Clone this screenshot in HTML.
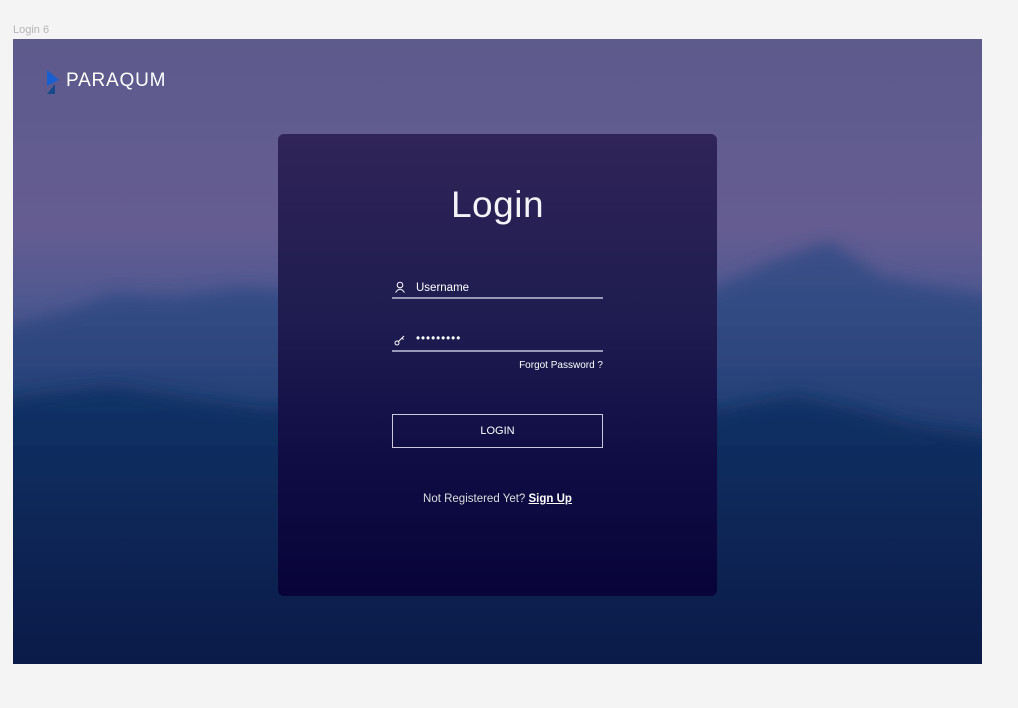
<!DOCTYPE html>
<html><head><meta charset="utf-8"><style>
*{margin:0;padding:0;box-sizing:border-box}
body{width:1018px;height:708px;background:#f4f4f4;position:relative;overflow:hidden;font-family:"Liberation Sans",sans-serif}
.lbl{position:absolute;left:13px;top:24px;font-size:11px;color:#b5b5b5}
.frame{position:absolute;left:13px;top:39px;width:969px;height:625px;overflow:hidden;background:linear-gradient(#5d5a8c 0%,#655d92 30%,#4f5890 42%,#2a4478 58%,#0f2655 78%,#0a1a4a 100%)}
.frame svg{position:absolute;left:0;top:0}
.card{position:absolute;left:265px;top:95px;width:439px;height:462px;border-radius:6px;background:linear-gradient(#302458 0%,#1e1c50 40%,#0f0d44 70%,#08043a 100%);color:#fff}
.title{position:absolute;left:0;width:100%;top:50px;text-align:center;font-size:37px;font-weight:300;letter-spacing:.5px;color:#f4f4f8}
.field{position:absolute;left:114px;width:211px;border-bottom:2px solid #9a98b8;font-size:11.5px;height:22px}
.field span{position:absolute;left:24px;top:5px}
.field svg{position:absolute;left:2px;top:4px}
.fp{position:absolute;right:114px;top:226px;font-size:10px}
.btn{position:absolute;left:114px;top:280px;width:211px;height:34px;border:1.5px solid #c9c8dc;text-align:center;line-height:32px;font-size:11px}
.reg{position:absolute;left:0;width:100%;top:359px;text-align:center;font-size:11.5px;color:#ddd}
.reg b{color:#fff;text-decoration:underline}
.logo{position:absolute;left:34px;top:30px;color:#fff;font-size:19px;letter-spacing:.8px}
</style></head><body>
<div class="lbl">Login 6</div>
<div class="frame">
<svg width="969" height="625" viewBox="0 0 969 625">
<defs><filter id="b" filterUnits="userSpaceOnUse" x="-100" y="0" width="1200" height="800"><feGaussianBlur stdDeviation="8"/></filter>
<linearGradient id="g1" gradientUnits="userSpaceOnUse" x1="0" y1="200" x2="0" y2="625"><stop offset="0" stop-color="#2f4a84"/><stop offset="1" stop-color="#1a3568"/></linearGradient>
<linearGradient id="g2" gradientUnits="userSpaceOnUse" x1="0" y1="345" x2="0" y2="625"><stop offset="0" stop-color="#123266"/><stop offset=".5" stop-color="#0e2656"/><stop offset="1" stop-color="#0a1a48"/></linearGradient></defs>
<polygon filter="url(#b)" fill="url(#g1)" opacity=".75" points="-40,300 60,270 100,255 160,258 230,248 300,255 400,235 500,245 600,255 700,250 760,222 817,202 870,238 930,250 1010,262 1010,625 -40,625"/>
<polygon filter="url(#b)" fill="url(#g2)" opacity=".9" points="-40,362 40,352 100,346 160,355 250,368 330,360 420,345 500,360 600,372 700,370 780,355 840,368 900,385 1010,400 1010,625 -40,625"/>
<rect x="0" y="440" width="969" height="185" fill="url(#g2)" opacity=".9"/>
</svg>
<div class="logo"><svg width="14" height="24" viewBox="0 0 14 24" style="position:absolute;left:0;top:1px"><polygon points="0,0 12,10 0,16" fill="#1a5fd0"/><polygon points="8,14 8,24 0,24" fill="#164a8a"/></svg><span style="position:absolute;left:19px;top:1px;white-space:nowrap">PARAQUM</span></div>
<div class="card">
<div class="title">Login</div>
<div class="field" style="top:143px"><svg width="12" height="12" viewBox="0 0 12 12"><circle cx="6" cy="4" r="2.8" fill="none" stroke="#fff" stroke-width="1"/><path d="M1.5 11.5 Q6 5 10.5 11.5" fill="none" stroke="#fff" stroke-width="1"/></svg><span>Username</span></div>
<div class="field" style="top:196px"><svg width="12" height="12" viewBox="0 0 12 12"><circle cx="3" cy="9" r="2" fill="none" stroke="#fff" stroke-width="1"/><path d="M4.5 7.5 L10 2 M8 4 L9.5 5.5" stroke="#fff" stroke-width="1"/></svg><span style="top:3px;letter-spacing:1px">•••••••••</span></div>
<div class="fp">Forgot Password ?</div>
<div class="btn">LOGIN</div>
<div class="reg">Not Registered Yet? <b>Sign Up</b></div>
</div>
</div>
</body></html>
